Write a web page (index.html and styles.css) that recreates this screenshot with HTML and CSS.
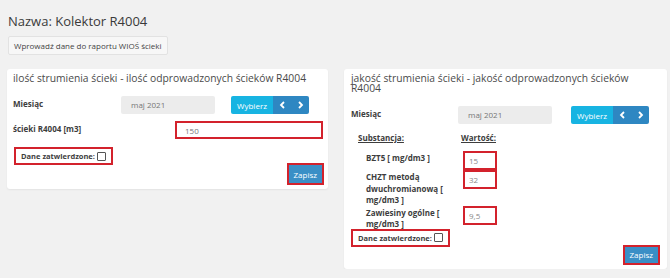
FILE: index.html
```html
<!DOCTYPE html>
<html lang="pl">
<head>
  <meta charset="UTF-8" />
  <title>Kolektor R4004</title>
  <link rel="stylesheet" href="styles.css">
</head>
<body>
  <h2 class="page-title">Nazwa: Kolektor R4004</h2>
  <button class="btn-light">Wprowadź dane do raportu WIOŚ ścieki</button>

  <div class="columns">
    <div class="card">
      <div class="card-title">ilość strumienia ścieki - ilość odprowadzonych ścieków R4004</div>

      <div class="row month-row">
        <label class="lbl">Miesiąc</label>
        <div class="month-input">maj 2021</div>
        <div class="btn-group">
          <button class="btn-pick">Wybierz</button>
          <button class="btn-arrow"><svg width="7" height="8" viewBox="0 0 7 8"><path d="M5 1 L2 4 L5 7" fill="none" stroke="#fff" stroke-width="1.8"/></svg></button>
          <button class="btn-arrow"><svg width="7" height="8" viewBox="0 0 7 8"><path d="M2 1 L5 4 L2 7" fill="none" stroke="#fff" stroke-width="1.8"/></svg></button>
        </div>
      </div>

      <div class="row value-row">
        <label class="lbl">ścieki R4004 [m3]</label>
        <input class="wide-input marked" value="150" />
      </div>

      <div class="confirm marked">Dane zatwierdzone: <span class="check"></span></div>

      <div class="actions">
        <button class="btn-save marked">Zapisz</button>
      </div>
    </div>

    <div class="card card-wide">
      <div class="card-title">jakość strumienia ścieki - jakość odprowadzonych ścieków R4004</div>

      <div class="row month-row">
        <label class="lbl">Miesiąc</label>
        <div class="month-input">maj 2021</div>
        <div class="btn-group">
          <button class="btn-pick">Wybierz</button>
          <button class="btn-arrow"><svg width="7" height="8" viewBox="0 0 7 8"><path d="M5 1 L2 4 L5 7" fill="none" stroke="#fff" stroke-width="1.8"/></svg></button>
          <button class="btn-arrow"><svg width="7" height="8" viewBox="0 0 7 8"><path d="M2 1 L5 4 L2 7" fill="none" stroke="#fff" stroke-width="1.8"/></svg></button>
        </div>
      </div>

      <div class="subst">
        <div class="subst-head">
          <span class="col-name">Substancja:</span>
          <span class="col-val">Wartość:</span>
        </div>
        <div class="subst-row">
          <span class="col-name">BZT5 [ mg/dm3 ]</span>
          <input class="small-input marked" value="15" />
        </div>
        <div class="subst-row">
          <span class="col-name">CHZT metodą dwuchromianową [ mg/dm3 ]</span>
          <input class="small-input marked" value="32" />
        </div>
        <div class="subst-row">
          <span class="col-name">Zawiesiny ogólne [ mg/dm3 ]</span>
          <input class="small-input marked" value="9,5" />
        </div>
      </div>

      <div class="confirm marked">Dane zatwierdzone: <span class="check"></span></div>

      <div class="actions">
        <button class="btn-save marked">Zapisz</button>
      </div>
    </div>
  </div>
</body>
</html>
```

FILE: styles.css
```css
:root {
  --background: #f1f1f1;
  --card: #ffffff;
  --text: #3d3d3d;
  --muted: #8a8a8a;
  --mark: #d3222c;
  --pick: #17b4e2;
  --arrow: #2e87c2;
  --save: #3a8fc6;
}

* {
  box-sizing: border-box;
}

body {
  margin: 0;
  padding: 13px 3px 0 7px;
  background-color: var(--background);
  font-family: 'Open Sans', sans-serif;
  color: var(--text);
  font-size: 8px;
}

.page-title {
  margin: 0 0 6px 1px;
  font-size: 13px;
  line-height: 17px;
  font-weight: 400;
  color: #3a3a3a;
}

.btn-light {
  margin-left: 1px;
  height: 19px;
  padding: 0 5px;
  background: #f7f7f7;
  border: 1px solid #e2e2e2;
  border-radius: 2px;
  font-family: inherit;
  font-size: 8px;
  color: #444;
}

.columns {
  display: flex;
  align-items: flex-start;
  gap: 16px;
  margin-top: 14px;
}

.card {
  flex: 321px 0 0;
  background-color: var(--card);
  border-radius: 3px;
  box-shadow: 0 1px 2px rgba(0,0,0,0.06);
  padding: 4px 4px 4px 6px;
}

.card-wide {
  flex: 323px 0 0;
  padding: 4px 7px 4px 7px;
}

.card-title {
  font-size: 10.3px;
  line-height: 10px;
  color: #4a4a4a;
  margin-bottom: 13px;
}

.card-wide .card-title {
  padding-right: 20px;
}

.row {
  display: flex;
  align-items: center;
}

.lbl {
  font-weight: 700;
  font-size: 8px;
  width: 108px;
  align-self: flex-start;
  padding-top: 2px;
}

.card-wide .lbl {
  width: 107px;
}

.month-input {
  width: 94px;
  height: 18px;
  line-height: 18px;
  padding-left: 10px;
  background: #ececec;
  border-radius: 2px;
  color: #777;
  font-size: 8px;
}

.btn-group {
  display: flex;
  margin-left: 16px;
}

.card-wide .btn-group {
  margin-left: 19px;
}

.btn-group button {
  display: flex;
  align-items: center;
  justify-content: center;
  height: 18px;
  border: none;
  color: #fff;
  font-family: inherit;
  font-size: 8px;
  padding: 0;
}

.btn-pick {
  width: 42px;
  background: var(--pick);
  border-radius: 2px 0 0 2px;
}

.btn-arrow {
  width: 18px;
  background: var(--arrow);
}

.btn-arrow:last-child {
  border-radius: 0 2px 2px 0;
}

.value-row {
  margin-top: 7px;
}

.value-row .lbl {
  width: 162px;
}

.marked {
  border: 2px solid var(--mark) !important;
}

.wide-input {
  width: 148px;
  height: 18px;
  padding: 0 8px;
  font-family: inherit;
  font-size: 8px;
  color: #777;
}

.confirm {
  display: inline-flex;
  align-items: center;
  gap: 2px;
  margin: 8px 0 0 1px;
  height: 18px;
  padding: 0 5px;
  font-weight: 700;
  font-size: 7.5px;
}

.check {
  display: inline-block;
  width: 9px;
  height: 9px;
  border: 1px solid #555;
  border-radius: 1px;
}

.actions {
  display: flex;
  justify-content: flex-end;
  margin-top: -2px;
}

.btn-save {
  height: 22px;
  padding: 0 5px;
  background: var(--save);
  color: #fff;
  font-family: inherit;
  font-size: 8px;
}

.card-wide .btn-save {
  height: 20px;
}

.subst {
  margin-top: 8px;
  padding-left: 7px;
}

.subst-head {
  display: flex;
  font-weight: 700;
  text-decoration: underline;
  line-height: 11px;
  margin-bottom: 8px;
}

.col-name {
  width: 103px;
  font-weight: 700;
}

.subst-row {
  display: flex;
  align-items: flex-start;
  padding-left: 8px;
}

.subst-row .col-name {
  width: 97px;
  padding-right: 10px;
  line-height: 11.5px;
  padding-top: 1px;
}

.small-input {
  width: 34px;
  height: 19px;
  padding: 0 4px;
  font-family: inherit;
  font-size: 8px;
  color: #888;
}

.card-wide .confirm {
  margin-top: -1px;
  margin-left: 0;
}
```
